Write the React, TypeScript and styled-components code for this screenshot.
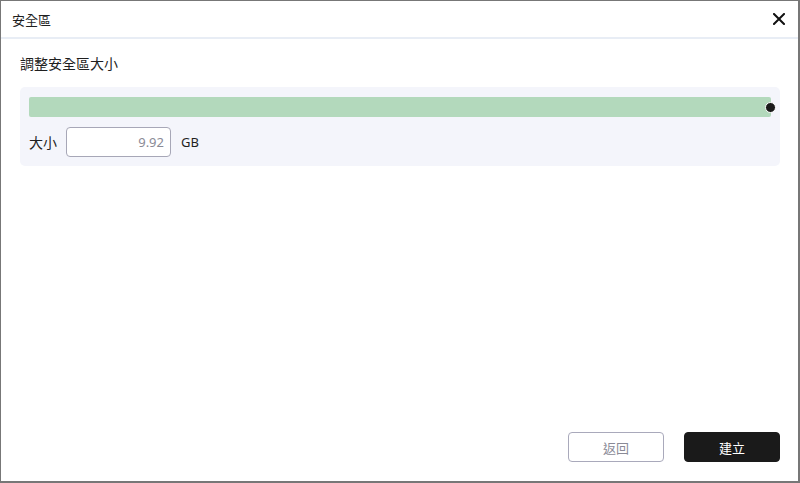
import React from "react";
import styled, { createGlobalStyle } from "styled-components";

const Global = createGlobalStyle`
  html, body { margin: 0; padding: 0; background: #fff; }
  body { font-family: "Noto Sans CJK TC", "Noto Sans", sans-serif; }
  * { box-sizing: border-box; }
`;

const Window = styled.div`
  width: 800px;
  height: 483px;
  display: flex;
  flex-direction: column;
  border-top: 1px solid #777;
  border-left: 1px solid #777;
  border-right: 2px solid #777;
  border-bottom: 2px solid #777;
  background: #fff;
`;

const Header = styled.div`
  height: 38px;
  flex: none;
  display: flex;
  align-items: center;
  justify-content: space-between;
  padding: 0 12px 0 11px;
  border-bottom: 2px solid #e8edf5;
`;

const Title = styled.div`
  font-size: 13px;
  color: #1f1f1f;
`;

const Close = styled.button`
  border: none;
  background: none;
  padding: 0;
  width: 14px;
  height: 14px;
  display: flex;
  align-items: center;
  justify-content: center;
  cursor: pointer;
`;

const Body = styled.div`
  flex: 1;
  display: flex;
  flex-direction: column;
  padding: 14px 18px 19px 19px;
`;

const Label = styled.div`
  font-size: 14px;
  color: #1f1f1f;
  line-height: 20px;
  margin-bottom: 14px;
`;

const Panel = styled.div`
  background: #f4f5fb;
  border-radius: 5px;
  padding: 10px 9px 9px 9px;
  display: flex;
  flex-direction: column;
  gap: 10px;
`;

const Track = styled.div`
  position: relative;
  height: 20px;
  background: #b3d9bc;
  border-radius: 2px;
`;

const Thumb = styled.div`
  position: absolute;
  right: -5px;
  top: 50%;
  width: 11px;
  height: 11px;
  margin-top: -5.5px;
  border-radius: 50%;
  background: #1a1a1a;
  border: 1px solid #fff;
`;

const SizeRow = styled.div`
  display: flex;
  align-items: center;
  height: 30px;
`;

const SizeLabel = styled.span`
  font-size: 14px;
  color: #1f1f1f;
  width: 37px;
`;

const Input = styled.input`
  width: 105px;
  height: 30px;
  border: 1px solid #a7a7b7;
  border-radius: 4px;
  background: #fff;
  text-align: right;
  padding: 0 6px;
  font-family: "Noto Sans", sans-serif;
  font-size: 13px;
  color: #8a8a96;
  outline: none;
`;

const Unit = styled.span`
  margin-left: 10px;
  font-family: "Noto Sans", sans-serif;
  font-size: 13px;
  color: #1f1f1f;
`;

const Spacer = styled.div`
  flex: 1;
`;

const Footer = styled.div`
  display: flex;
  justify-content: flex-end;
  gap: 20px;
`;

const Button = styled.button<{ $primary?: boolean }>`
  width: 96px;
  height: 30px;
  border-radius: 4px;
  font-family: "Noto Sans CJK TC", sans-serif;
  font-size: 13px;
  cursor: pointer;
  border: 1px solid ${(p) => (p.$primary ? "#1a1a1a" : "#a9a9bb")};
  background: ${(p) => (p.$primary ? "#1a1a1a" : "#fff")};
  color: ${(p) => (p.$primary ? "#fff" : "#8a8a96")};
`;

export default function App() {
  return (
    <>
      <Global />
      <Window>
        <Header>
          <Title>安全區</Title>
          <Close aria-label="close">
            <svg width="12" height="12" viewBox="0 0 12 12">
              <path d="M1 1 L11 11 M11 1 L1 11" stroke="#111" strokeWidth="2" strokeLinecap="square" />
            </svg>
          </Close>
        </Header>
        <Body>
          <Label>調整安全區大小</Label>
          <Panel>
            <Track>
              <Thumb />
            </Track>
            <SizeRow>
              <SizeLabel>大小</SizeLabel>
              <Input defaultValue="9.92" />
              <Unit>GB</Unit>
            </SizeRow>
          </Panel>
          <Spacer />
          <Footer>
            <Button>返回</Button>
            <Button $primary>建立</Button>
          </Footer>
        </Body>
      </Window>
    </>
  );
}
